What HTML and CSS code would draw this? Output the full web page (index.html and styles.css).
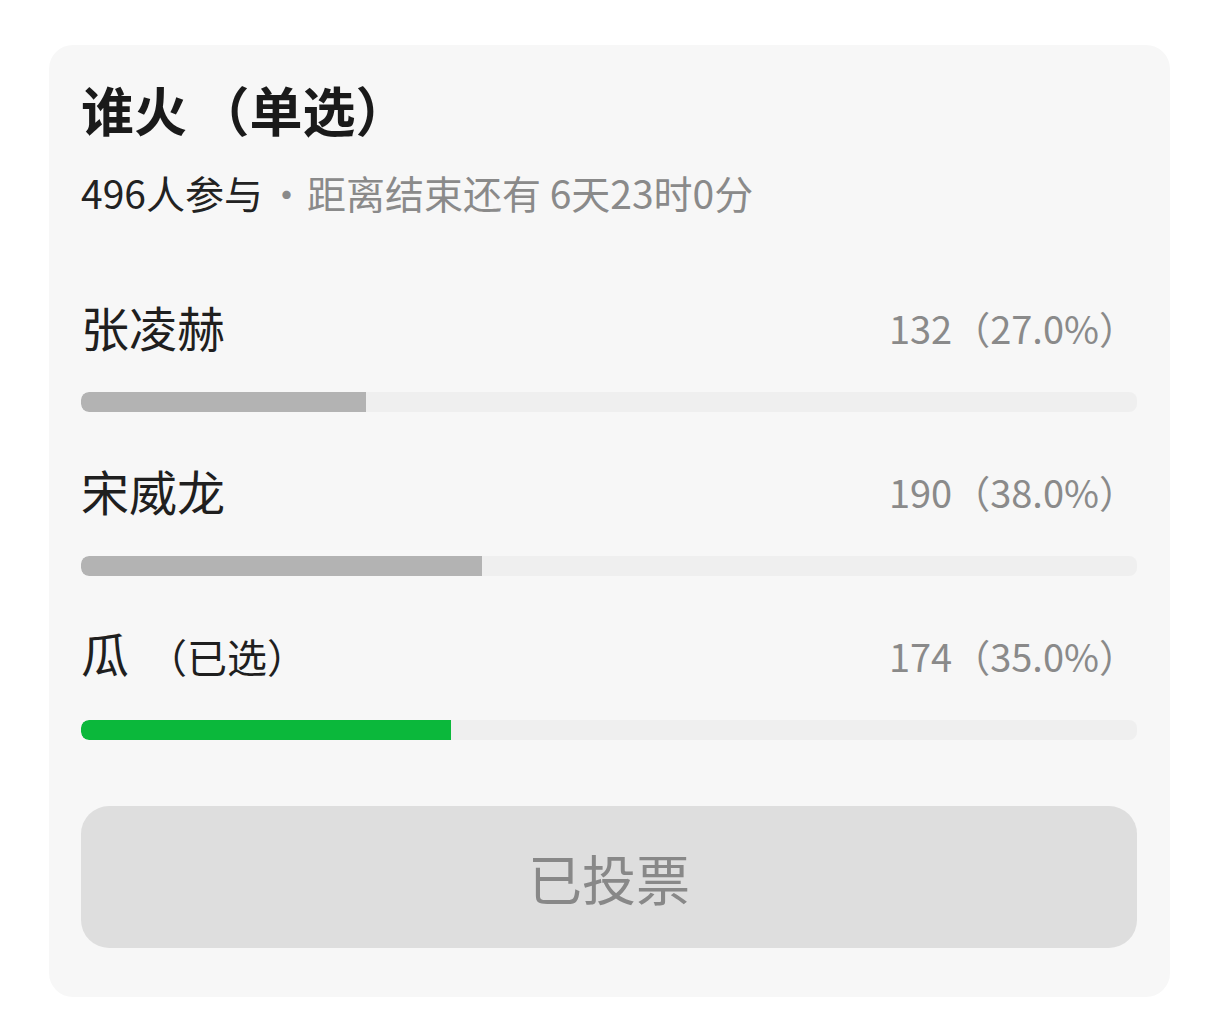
FILE: index.html
```html
<!DOCTYPE html>
<html lang="zh-CN">
<head>
<meta charset="utf-8">
<title>投票</title>
<link rel="stylesheet" href="styles.css">
</head>
<body>
<div class="page">
  <div class="card">
    <h1 class="title">谁火<span class="po">（</span>单选）</h1>
    <div class="meta"><span class="count-total">496人参与</span><span class="dot">·</span><span class="remain">距离结束还有 6天23时0分</span></div>
    <div class="options">
      <div class="option">
        <div class="row"><span class="label">张凌赫</span><span class="num">132（27.0%）</span></div>
        <div class="track"><div class="fill" style="width:27.0%"></div></div>
      </div>
      <div class="option">
        <div class="row"><span class="label">宋威龙</span><span class="num">190（38.0%）</span></div>
        <div class="track"><div class="fill" style="width:38.0%"></div></div>
      </div>
      <div class="option">
        <div class="row"><span class="label">瓜 <span class="tag"><span class="po">（</span>已选）</span></span><span class="num">174（35.0%）</span></div>
        <div class="track"><div class="fill fill-selected" style="width:35.0%"></div></div>
      </div>
    </div>
    <div class="button">已投票</div>
  </div>
</div>
</body>
</html>
```
FILE: styles.css
```css
html, body {
  margin: 0;
  padding: 0;
  background: #ffffff;
}
body {
  font-family: "Noto Sans CJK SC", "Noto Sans", sans-serif;
  width: 1216px;
  height: 1031px;
  overflow: hidden;
}
.page {
  padding: 45px 46px 0 49px;
}
.card {
  width: 1121px;
  height: 952px;
  box-sizing: border-box;
  background: #f7f7f7;
  border-radius: 24px;
  padding: 33px 33px 0 32px;
}
.title {
  margin: 0;
  font-size: 53px;
  line-height: 63px;
  font-weight: 700;
  color: #1a1a1a;
}
.po {
  display: inline-block;
  width: 1em;
  padding-left: 0.18em;
  text-align: right;
}
.meta {
  margin-top: 28px;
  font-size: 39px;
  line-height: 47px;
  color: #8a8a8a;
}
.count-total {
  color: #222222;
}
.dot {
  margin: 0 1px 0 4px;
}
.options {
  margin-top: 81px;
  display: flex;
  flex-direction: column;
}
.option {
  display: flex;
  flex-direction: column;
}
.option + .option {
  margin-top: 49px;
}
.row {
  display: flex;
  justify-content: space-between;
  align-items: center;
  height: 58px;
}
.label {
  font-size: 48px;
  line-height: 58px;
  color: #1f1f1f;
}
.tag {
  font-size: 40px;
}
.num {
  font-size: 38px;
  line-height: 46px;
  color: #8a8a8a;
  padding-top: 4px;
}
.track {
  margin-top: 37px;
  height: 20px;
  border-radius: 8px;
  background: #efefef;
  overflow: hidden;
}
.fill {
  height: 100%;
  background: #b3b3b3;
  border-radius: 8px 0 0 8px;
}
.fill-selected {
  background: #0bb83b;
}
.button {
  margin-top: 66px;
  height: 142px;
  border-radius: 28px;
  background: #dedede;
  color: #888888;
  font-size: 54px;
  display: flex;
  align-items: center;
  justify-content: center;
}
```
